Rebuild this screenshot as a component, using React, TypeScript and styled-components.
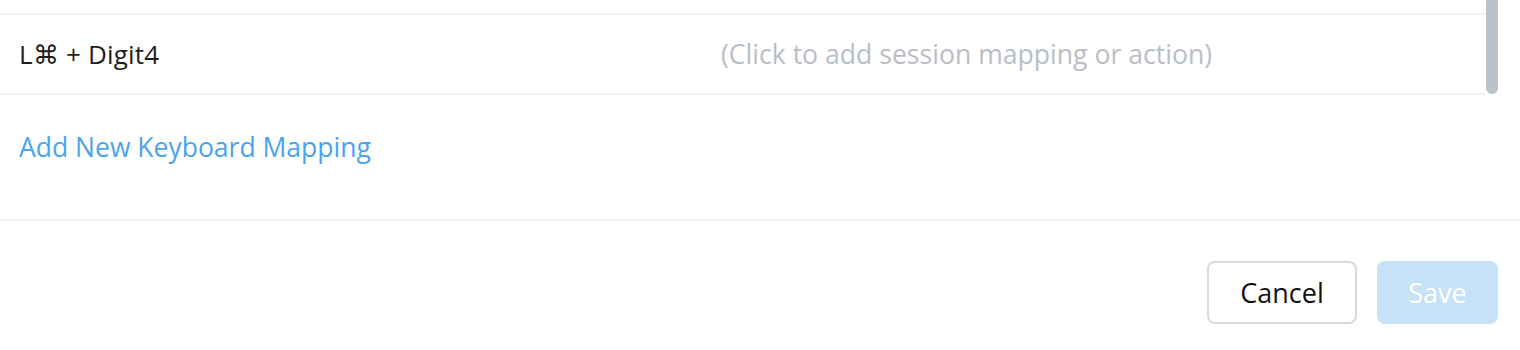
import React, { useLayoutEffect, useRef } from 'react';
import styled, { createGlobalStyle } from 'styled-components';

const GlobalStyle = createGlobalStyle`
    html, body {
        margin: 0;
        padding: 0;
        background: #ffffff;
        font-family: 'Open Sans', 'Liberation Sans', sans-serif;
    }
`;

const mappings = [
    { key: 'L⌘ + Digit3', action: '' },
    { key: 'L⌘ + Digit4', action: '' },
];

const App: React.FC = () => {
    const listRef = useRef<HTMLDivElement>(null);

    // list is scrolled to the bottom, like after adding a mapping
    useLayoutEffect(() => {
        if (listRef.current) {
            listRef.current.scrollTop = listRef.current.scrollHeight;
        }
    }, []);

    return (
        <>
            <GlobalStyle />
            <Modal>
                <ListWrap>
                    <List ref={listRef}>
                        {mappings.map(m => (
                            <Row key={m.key}>
                                <KeyText>{m.key}</KeyText>
                                <ActionText empty={!m.action}>
                                    {m.action ||
                                        '(Click to add session mapping or action)'}
                                </ActionText>
                            </Row>
                        ))}
                    </List>
                    <ScrollThumb />
                </ListWrap>
                <AddSection>
                    <AddLink href="#">Add New Keyboard Mapping</AddLink>
                </AddSection>
                <Footer>
                    <Button width={150}>Cancel</Button>
                    <Button primary disabled width={121}>
                        Save
                    </Button>
                </Footer>
            </Modal>
        </>
    );
};

const Modal = styled.div`
    width: 1520px;
    height: 350px;
    background: #ffffff;
    display: flex;
    flex-direction: column;
`;

const ListWrap = styled.div`
    position: relative;
    height: 95px;
    padding-right: 34px;
`;

const List = styled.div`
    height: 95px;
    overflow: hidden;
`;

const Row = styled.div`
    display: grid;
    grid-template-columns: 702px 1fr;
    align-items: center;
    height: 78px;
    padding: 0 19px;
    border-bottom: 2px solid #f1f1f1;
`;

const KeyText = styled.span`
    font-size: 26px;
    color: #1e1e1e;
    letter-spacing: 0.2px;
    white-space: nowrap;
`;

const ActionText = styled.span<{ empty?: boolean }>`
    font-size: 26.6px;
    color: ${p => (p.empty ? '#b9bec6' : '#1e1e1e')};
    white-space: nowrap;
`;

const ScrollThumb = styled.div`
    position: absolute;
    right: 22px;
    top: -20px;
    width: 12px;
    height: 114px;
    border-radius: 6px;
    background: #bac4c8;
`;

const AddSection = styled.div`
    height: 124px;
    padding: 0 19px;
    border-bottom: 2px solid #f1f1f1;
    display: flex;
    align-items: flex-start;
`;

const AddLink = styled.a`
    margin-top: 34px;
    font-size: 26.5px;
    color: #4ba3ee;
    text-decoration: none;
`;

const Footer = styled.div`
    display: flex;
    justify-content: flex-end;
    gap: 20px;
    padding: 40px 22px 0 0;
`;

const Button = styled.button<{ primary?: boolean; width: number }>`
    box-sizing: border-box;
    height: 63px;
    width: ${p => p.width}px;
    padding: 0;
    border-radius: 8px;
    font-family: inherit;
    font-size: 27px;
    cursor: pointer;
    border: 2px solid ${p => (p.primary ? '#c6e2f7' : '#d6d9de')};
    background: ${p => (p.primary ? '#c6e2f7' : '#ffffff')};
    color: ${p => (p.primary ? '#ffffff' : '#111111')};
`;

export default App;
